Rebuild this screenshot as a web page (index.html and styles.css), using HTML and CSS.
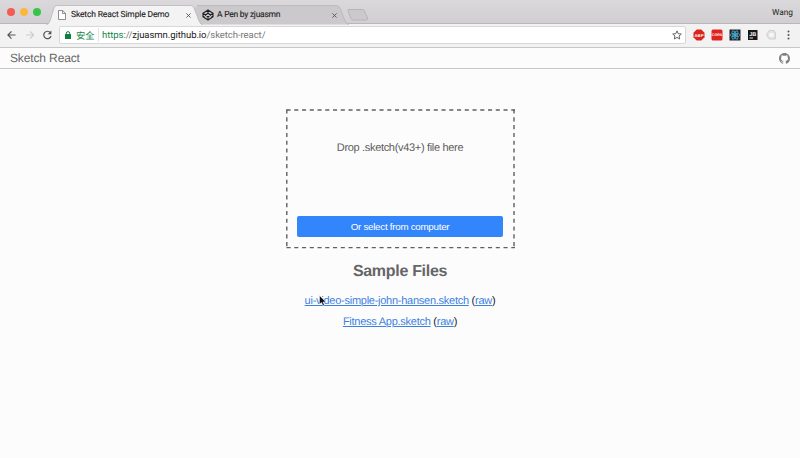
FILE: index.html
```html
<!DOCTYPE html>
<html lang="en">
<head>
<meta charset="utf-8">
<title>Sketch React Simple Demo</title>
<link rel="stylesheet" href="styles.css">
</head>
<body>
<div class="tabstrip">
  <div class="lights"><i class="red"></i><i class="yellow"></i><i class="green"></i></div>
  <div class="tab active">
    <svg class="shape" viewBox="0 0 157 20" width="157" height="20"><path d="M0 20C3 19 3 18 4 16L8 3Q9 .5 11 .5H145Q147 .5 148 3L153 16Q154 19 157 20" fill="#f4f3f4" stroke="#b4b2b4" stroke-width=".7"/></svg>
    <svg class="doc" viewBox="0 0 8 10" width="8" height="10"><path d="M.5.5H4.7L7.5 3.3V9.5H.5ZM4.5.5V3.5H7.5" fill="#fff" stroke="#747474" stroke-width=".8"/></svg>
    <span class="title t1">Sketch React Simple Demo</span>
    <svg class="close" viewBox="0 0 5 5" width="5" height="5"><path d="M.4.4 4.6 4.6M4.6.4.4 4.6"/></svg>
  </div>
  <div class="tab second">
    <svg class="shape" viewBox="0 0 157 20" width="157" height="20"><path d="M5 .5H144Q147 .5 148 3L153 16Q154 19 157 19.5H7Q6 19 5 16L1 6Z" fill="#cbc9cb"/><path d="M5 .5H144Q147 .5 148 3L153 16Q154 19 157 19.5" fill="none" stroke="#b4b2b4" stroke-width=".7"/></svg>
    <svg class="pen" viewBox="0 0 12 12" width="12" height="12"><path d="M6 1 11 4.3V7.7L6 11 1 7.7V4.3ZM1 4.3 6 7.7 11 4.3M1 7.7 6 4.3 11 7.7M6 1V4.3M6 7.7V11" fill="none" stroke="#222" stroke-width="1.15" stroke-linejoin="round"/></svg>
    <span class="title t2">A Pen by zjuasmn</span>
    <svg class="close" viewBox="0 0 5 5" width="5" height="5"><path d="M.4.4 4.6 4.6M4.6.4.4 4.6"/></svg>
  </div>
  <svg class="newtab" viewBox="0 0 22 12" width="22" height="12"><path d="M2 .5H15.500Q17 .5 17.500 2L20.500 9Q21 11 19.500 11H6Q4.500 11 4 9.500L1 2Q.5 .5 2 .5Z" fill="#cbc9cb" stroke="#b0aeb0" stroke-width=".8"/></svg>
  <span class="user">Wang</span>
</div>
<div class="toolbar">
  <svg class="nav" viewBox="0 0 55 12" width="55" height="12" fill="none" stroke-width="1.2"><path d="M8.500 6H1M4.500 2.300 .9 6 4.500 9.700" stroke="#555"/><path d="M19 6H26.500M23 2.300 26.600 6 23 9.700" stroke="#ccc"/><path d="M43.300 3.600A3.700 3.700 0 1 0 44 7" stroke="#555"/><path d="M44.400 1.500V5.200H40.700Z" fill="#555"/></svg>
  <div class="omnibox">
    <svg class="lock" viewBox="0 0 6 8" width="6" height="8"><path d="M1.300 4V2.300Q1.300.6 3 .6T4.700 2.300V4" fill="none" stroke="#0b8043"/><rect y="3" width="6" height="5" rx=".5" fill="#0b8043"/></svg>
    <span class="safe">安全</span>
    <span class="url"><span class="scheme">https:</span><span class="path">//</span>zjuasmn.github.io<span class="path tail">/sketch-react/</span></span>
    <svg class="star" viewBox="0 0 10 10" width="10" height="10"><path d="M5 .9 6.200 3.700 9.300 4 7 6 7.700 9 5 7.400 2.300 9 3 6 .7 4 3.800 3.700Z" fill="none" stroke="#555" stroke-width=".9"/></svg>
  </div>
  <div class="extensions">
    <svg viewBox="0 0 12 12" width="12" height="12"><path d="M3.700.5H8.300L11.500 3.700V8.300L8.300 11.500H3.700L.5 8.300V3.700Z" fill="#d9251c"/><text x="6" y="7.500" text-anchor="middle" class="badge">ABP</text></svg>
    <svg viewBox="0 0 12 12" width="12" height="12"><rect x=".5" y=".5" width="11" height="11" rx="1.500" fill="#df2420"/><text x="6" y="7.300" text-anchor="middle" class="badge cors">CORS</text></svg>
    <svg viewBox="0 0 12 12" width="12" height="12"><rect x=".5" y=".5" width="11" height="11" fill="#222"/><g fill="none" stroke="#47aeda" stroke-width=".8"><ellipse cx="6" cy="6" rx="4.800" ry="1.800"/><ellipse cx="6" cy="6" rx="4.800" ry="1.800" transform="rotate(60 6 6)"/><ellipse cx="6" cy="6" rx="4.800" ry="1.800" transform="rotate(120 6 6)"/></g><circle cx="6" cy="6" r="1.200" fill="#47aeda"/></svg>
    <svg viewBox="0 0 12 12" width="12" height="12"><rect x="1" y="1" width="9.500" height="10" fill="#171717"/><text x="2.300" y="6.500" class="jb">JB</text><path d="M2.500 9H6" stroke="#fff" stroke-width=".9"/></svg>
    <svg viewBox="0 0 12 12" width="12" height="12"><path d="M4 1.500H9L10.500 4V10H4L1.500 6Z" fill="#e3e3e3" stroke="#d2d2d2"/><path d="M5 4H8L9 6 7.500 8H5L4 6Z" fill="#f7f7f7"/></svg>
    <svg viewBox="0 0 12 12" width="12" height="12" fill="#555"><circle cx="5.500" cy="2.500" r="1"/><circle cx="5.500" cy="6" r="1"/><circle cx="5.500" cy="9.500" r="1"/></svg>
  </div>
</div>
<header class="header">
  <span class="brand">Sketch React</span>
  <svg viewBox="0 0 16 16" width="11" height="11"><path fill="#808080" d="M8 0C3.580 0 0 3.580 0 8c0 3.540 2.290 6.530 5.470 7.590.4.070.55-.17.55-.38 0-.19-.01-.82-.01-1.490-2.010.37-2.530-.49-2.690-.94-.09-.23-.48-.94-.82-1.130-.28-.15-.68-.52-.01-.53.63-.01 1.080.58 1.230.82.72 1.210 1.870.87 2.330.66.070-.52.280-.87.510-1.070-1.780-.2-3.640-.89-3.640-3.950 0-.87.310-1.590.82-2.150-.08-.2-.36-1.020.08-2.120 0 0 .67-.21 2.200.82a7.600 7.600 0 0 1 4 0c1.530-1.040 2.200-.82 2.200-.82.44 1.100.16 1.920.08 2.120.51.56.82 1.270.82 2.150 0 3.070-1.870 3.750-3.650 3.950.29.25.54.73.54 1.480 0 1.070-.01 1.930-.01 2.200 0 .21.15.46.55.38A8.010 8.010 0 0 0 16 8c0-4.420-3.580-8-8-8z"/></svg>
</header>
<main class="main">
  <section class="drop">
    <svg class="dashes" width="229" height="140" fill="none" stroke="#606060" stroke-width="1.400"><path d="M.5 1H229M.5 138.600H229" stroke-dasharray="4.100 3.650"/><path d="M.8 .5V139.500M228 .5V139.500" stroke-dasharray="4.100 3.700"/></svg>
    <p class="hint">Drop .sketch(v43+) file here</p>
    <button class="select"><span>Or select from computer</span></button>
  </section>
  <h2 class="heading"><span>Sample Files</span></h2>
  <p class="file"><span class="f1"><a>ui-video-simple-john-hansen.sketch</a> (<a>raw</a>)</span></p>
  <p class="file"><span class="f2"><a>Fitness App.sketch</a> (<a>raw</a>)</span></p>
  <svg class="cursor" viewBox="0 0 8 12" width="8" height="12"><path d="M.5.5V9.300L2.500 7.500 3.900 10.800 5.400 10.100 4 7H6.800Z" fill="#111" stroke="#fff" stroke-width=".5"/></svg>
</main>
</body>
</html>
```
FILE: styles.css
```css
* { box-sizing: border-box; }
body { margin: 0; height: 458px; overflow: hidden; background: #fdfcfd; color: #333; font-family: "Liberation Sans", Arial, sans-serif; white-space: nowrap; text-rendering: geometricPrecision; }
svg { display: block; flex: none; }
.tabstrip { height: 24px; display: flex; align-items: flex-start; padding: 5px 7px 0 7px; background: linear-gradient(#dad8da, #d1cfd1); border-bottom: 1px solid #b9b7b9; }
.lights { display: flex; gap: 5px; width: 39px; padding-top: 3px; }
.lights i { width: 8px; height: 8px; border-radius: 50%; }
.red { background: #f45c53; }
.yellow { background: #fab83d; }
.green { background: #35c548; }
.tab { position: relative; width: 157px; height: 20px; display: flex; align-items: center; padding: 0 12px; }
.active { z-index: 1; }
.second { margin-left: -11px; padding-left: 10px; }
.shape { position: absolute; left: 0; top: 0; }
.doc, .pen, .title, .close { position: relative; }
.title { font: 8.500px/12px Roboto, sans-serif; color: #222; -webkit-text-stroke: .1px #222; }
.t1 { margin-left: 5px; letter-spacing: -.15px; }
.t2 { margin-left: 3px; letter-spacing: -.25px; }
.close { margin-left: auto; fill: none; stroke: #555; stroke-width: .9; }
.newtab { margin: 4px 0 0 -2px; }
.user { margin: 2px 0 0 auto; font: 8.300px/12px Roboto, sans-serif; color: #222; }
.toolbar { height: 24px; display: flex; align-items: center; padding: 0 5px 1px 7px; background: #f3f2f3; border-bottom: 1px solid #c8c7c8; }
.omnibox { width: 627px; height: 18px; margin-left: -3px; display: flex; align-items: center; padding: 0 3px 0 5px; background: #fff; border: 1px solid #d9d8d9; border-radius: 2px; }
.safe { width: 23px; margin-left: 5px; border-right: 1px solid #e5e5e5; color: #16854a; font: 9.300px/14px "Noto Sans CJK SC", sans-serif; }
.url { margin: 2px 0 0 3px; font: 9.500px/14px Roboto, sans-serif; color: #222; letter-spacing: -.06px; }
.scheme { color: #16854a; }
.path { color: #777; }
.star { margin-left: auto; }
.extensions { display: flex; gap: 6px; margin-left: auto; }
.badge { font: bold 4.200px "Liberation Sans", sans-serif; fill: #fff; }
.cors { font-size: 3.600px; }
.jb { font: bold 5.500px "Liberation Sans", sans-serif; fill: #fff; }
.header { height: 21px; display: flex; align-items: center; justify-content: space-between; padding: 0 10px; border-bottom: 1px solid #c9c7c9; color: #666; }
.brand { font-size: 12px; line-height: 18px; letter-spacing: -.13px; }
.main { position: relative; display: flex; flex-direction: column; align-items: center; padding-top: 40px; }
.drop { position: relative; width: 229px; height: 139px; margin-left: 1px; padding: 32px 12px 11px 11px; display: flex; flex-direction: column; justify-content: space-between; }
.dashes { position: absolute; left: 0; top: 0; }
.hint { margin: 0; text-align: center; font-size: 11px; line-height: 14px; letter-spacing: -.32px; color: #5c5c5c; }
.select { height: 21px; border: 0; border-radius: 2px; padding: 0; background: #3385fb; color: #fff; font: 9.800px/20px "Liberation Sans", sans-serif; letter-spacing: -.28px; }
.heading { margin: 13px 0 0; font-size: 16px; line-height: 22px; letter-spacing: -.3px; color: #666; }
.file { margin: 11px 0 0; font-size: 11px; line-height: 14px; letter-spacing: -.26px; color: #222; }
.file + .file { margin-top: 7px; }
.file a { color: #3b82e0; text-decoration: underline; text-decoration-thickness: 1px; }
.cursor { position: absolute; left: 319px; top: 226px; }
```
